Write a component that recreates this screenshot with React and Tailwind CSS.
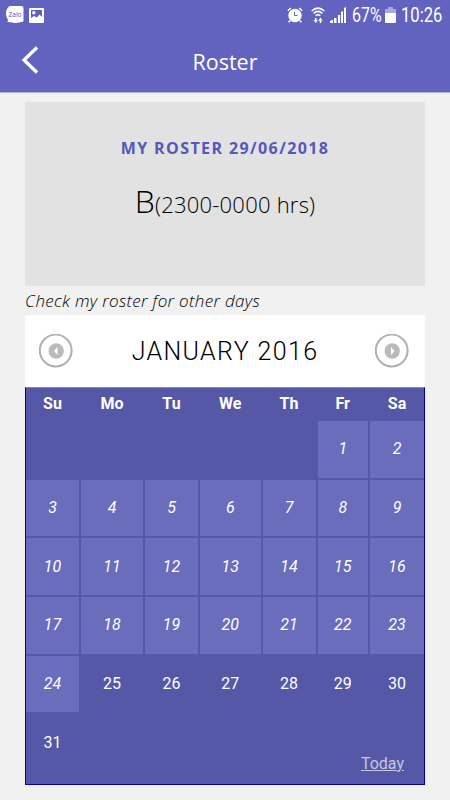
import React, { useState } from 'react';

const weekdays = ['Su', 'Mo', 'Tu', 'We', 'Th', 'Fr', 'Sa'];
const firstWeekday = 5;
const lastPastDay = 24;

function StatusBar() {
    return (
        <div className="h-[30px] flex items-center justify-between pl-[6px] pr-[8px] text-white">
            <div className="flex items-center gap-[5px]">
                <svg width="18" height="18" viewBox="0 0 18 18">
                    <path d="M4 0H15.500Q17.500 0 17.500 2V14.500Q17.500 16 16 16H15Q10 18 5 16.300L1.500 16L2 14Q-1.500 9 1 3Q2 .4 4 0Z" fill="#fff" />
                    <text x="9" y="11" textAnchor="middle" fontFamily="Open Sans, sans-serif" fontSize="7" fontWeight="500" textLength="13" lengthAdjust="spacingAndGlyphs" fill="#5557bb">Zalo</text>
                </svg>
                <svg width="15" height="15" viewBox="0 0 15 15" className="mt-px">
                    <rect width="15" height="15" rx="1" fill="#fff" />
                    <path d="M2 2H13V9L10.500 6.500L8 9.500L5 8L2 10Z" fill="#5f60bd" />
                    <circle cx="4.800" cy="4.700" r="1.700" fill="#fff" />
                </svg>
            </div>
            <div className="flex items-center">
                <svg width="16" height="16" viewBox="0 0 16 16" className="mr-[8px]">
                    <circle cx="8" cy="8.500" r="6.700" fill="#fff" />
                    <path d="M.8 3.800L3.800 1M15.200 3.800L12.200 1M3.300 13.500L1.500 15.300M12.700 13.500L14.500 15.300" stroke="#fff" strokeWidth="1.500" />
                    <path d="M7.500 5V8.500H10.500" fill="none" stroke="#6163bf" strokeWidth="1" />
                </svg>
                <svg width="14" height="17" viewBox="0 0 14 17" className="mr-[5px]">
                    <g fill="none" stroke="#fff" strokeWidth="1.500">
                        <path d="M.6 4Q7 -1.800 13.400 4" />
                        <path d="M2.600 6.500Q7 2.300 11.400 6.500" />
                        <path d="M4.700 8.800Q7 6.600 9.300 8.800" />
                    </g>
                    <path d="M4 11H5.600V13H7L4.800 16L2.500 13H4ZM8.700 16V13.500H7.300L9.500 10.500L11.700 13.500H10.300V16Z" fill="#fff" />
                </svg>
                <svg width="16" height="16" viewBox="0 0 16 16" fill="#fff" className="mr-[6px]">
                    <path d="M0 16V14L3 12.700V16ZM4 16V11H6.500V16ZM8 16V8H10V16ZM11 16V4.500H13V16ZM14 16V1L16 0V16Z" />
                </svg>
                <span className="w-[30px] h-[23px] leading-[24px] text-[19.5px] origin-left scale-x-[0.82] mr-[3px] whitespace-nowrap">67%</span>
                <svg width="11" height="16" viewBox="0 0 11 16" className="mr-[5px]">
                    <path d="M3 0H8V2H11V6H0V2H3Z" fill="#a7a8dc" />
                    <path d="M0 6H11V15Q11 16 10 16H1Q0 16 0 15Z" fill="#fff" />
                </svg>
                <span className="w-[41px] h-[23px] leading-[24px] text-[19.5px] origin-left scale-x-[0.85] whitespace-nowrap">10:26</span>
            </div>
        </div>
    );
}

function MonthButton({ next }) {
    return (
        <button type="button" className="w-[34px] h-[34px]" aria-label={next ? 'Next month' : 'Previous month'}>
            <svg width="34" height="34" viewBox="0 0 34 34">
                <circle cx="16.700" cy="16.500" r="15.900" fill="none" stroke="#b0b0b0" strokeWidth="2" />
                <circle cx="17.200" cy="17" r="7.700" fill="#bbb" />
                <path d={next ? 'M16 13L19.500 17L16 21Z' : 'M18.500 13L15 17L18.500 21Z'} fill="#fff" />
            </svg>
        </button>
    );
}

function Day({ day, onSelect }) {
    const past = day <= lastPastDay;
    return (
        <button
            type="button"
            onClick={() => onSelect(day)}
            className={
                past
                    ? 'bg-[#6a6cbc] italic text-[16px] text-white'
                    : 'text-[16px] text-white'
            }
        >
            {day}
        </button>
    );
}

function App() {
    const [, setSelected] = useState(null);
    const days = Array.from({ length: 31 }, (_, i) => i + 1);

    return (
        <div className="w-[450px] h-[800px] overflow-hidden bg-[#f1f1f1] font-['Roboto',sans-serif]">
            <header className="h-[93px] bg-[#6163bf] border-b border-[#b4b4dc]">
                <StatusBar />
                <div className="h-[62px] flex items-center">
                    <button type="button" className="w-[60px] pl-[21px]" aria-label="Back">
                        <svg width="18" height="28" viewBox="0 0 18 28" className="-mt-[3px]">
                            <path d="M16 1.500L3 14L16 26.500" fill="none" stroke="#fff" strokeWidth="3.300" />
                        </svg>
                    </button>
                    <h1 className="flex-1 pr-[60px] pt-[2px] text-center text-white text-[21.5px] font-['Open_Sans',sans-serif]">Roster</h1>
                </div>
            </header>

            <main className="px-[25px] pt-[9px]">
                <section className="h-[184px] bg-[#e2e2e2] pt-[34px] text-center font-['Open_Sans',sans-serif]">
                    <h2 className="text-[16px] leading-[24px] font-bold tracking-[1.4px] text-[#5557bd]">MY ROSTER 29/06/2018</h2>
                    <p className="mt-[17px] text-[22px] leading-[48px] tracking-[0.22px] font-[350] text-black">
                        <span className="text-[32px]">B</span>(2300-0000 hrs)
                    </p>
                </section>

                <p className="h-[29px] leading-[29px] text-[17px] tracking-[0.33px] italic font-light text-black font-['Open_Sans',sans-serif]">Check my roster for other days</p>

                <div className="h-[72px] bg-white flex items-center justify-between pl-[14px] pr-[16px]">
                    <MonthButton />
                    <div className="text-[25px] tracking-[1.35px] font-[350] text-black pl-[2px] pt-[2px]">JANUARY 2016</div>
                    <MonthButton next />
                </div>

                <section className="h-[398px] bg-[#5557a7] border border-[#0000a0] border-t-[#8788c0] text-white">
                    <div className="h-[33px] grid grid-cols-[53px_62px_53px_60.5px_53px_50.5px_54px] gap-x-[2px] text-center text-[16px] leading-[32px] font-bold">
                        {weekdays.map((name) => (
                            <div key={name}>{name}</div>
                        ))}
                    </div>
                    <div className="grid grid-cols-[53px_62px_53px_60.5px_53px_50.5px_54px] auto-rows-[56.5px] gap-x-[2px] gap-y-[2.2px]">
                        {Array.from({ length: firstWeekday }, (_, i) => (
                            <div key={`empty-${i}`} />
                        ))}
                        {days.map((day) => (
                            <Day key={day} day={day} onSelect={setSelected} />
                        ))}
                    </div>
                    <div className="-mt-[19px] pr-[20px] text-right">
                        <a href="#" className="text-[16px] leading-[24px] underline text-[#c5c6e2]">Today</a>
                    </div>
                </section>
            </main>
        </div>
    );
}

export default App;
